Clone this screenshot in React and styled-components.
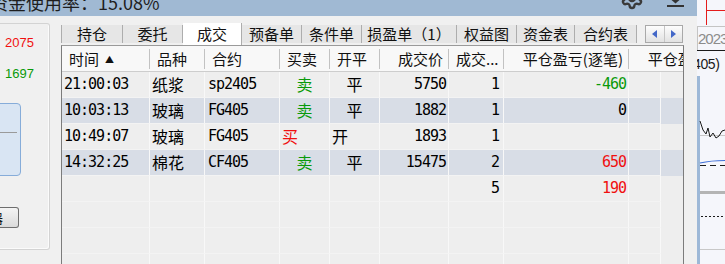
import styled, { createGlobalStyle } from "styled-components";
import { Settings } from "lucide-react";

const GlobalStyle = createGlobalStyle`
  html, body {
    margin: 0;
    padding: 0;
    background: #f0f0f0;
    overflow: hidden;
  }
  #root {
    width: 725px;
    height: 264px;
  }
`;

const tabs = [
  { label: "持仓", width: 62 },
  { label: "委托", width: 60 },
  { label: "成交", width: 59, active: true },
  { label: "预备单", width: 60 },
  { label: "条件单", width: 60 },
  { label: "损盈单（1）", width: 95 },
  { label: "权益图", width: 60 },
  { label: "资金表", width: 58 },
  { label: "合约表", width: 62 },
];

const headCols = "88px 55px 75px 50px 50px 69px 55px 125px 125px";
const rowCols = "88px 55px 75px 50px 50px 69px 55px 125px 32px";

const headers = [
  { label: "时间", sort: true },
  { label: "品种" },
  { label: "合约" },
  { label: "买卖" },
  { label: "开平" },
  { label: "成交价", align: "right" },
  { label: "成交..." },
  { label: "平仓盈亏(逐笔)", align: "right" },
  { label: "平仓盈亏(逐日)", align: "right" },
];

const trades = [
  { time: "21:00:03", name: "纸浆", code: "sp2405", side: "卖", offset: "平", price: "5750", qty: "1", pnl: "-460" },
  { time: "10:03:13", name: "玻璃", code: "FG405", side: "卖", offset: "平", price: "1882", qty: "1", pnl: "0" },
  { time: "10:49:07", name: "玻璃", code: "FG405", side: "买", offset: "开", price: "1893", qty: "1", pnl: "" },
  { time: "14:32:25", name: "棉花", code: "CF405", side: "卖", offset: "平", price: "15475", qty: "2", pnl: "650" },
  { time: "", name: "", code: "", side: "", offset: "", price: "", qty: "5", pnl: "190" },
  {}, {}, {},
];

const RED = "#f01010";
const GREEN = "#0a9a0a";

function pnlColor(v) {
  if (!v) return "#000";
  const n = Number(v);
  if (n < 0) return GREEN;
  if (n > 0) return RED;
  return "#000";
}

export default function App() {
  return (
    <Screen>
      <GlobalStyle />
      <Workspace>
        <TopBar>
          <Title>资金使用率：15.08%</Title>
          <TopIcons>
            <GearIcon size={24} strokeWidth={2.4} color="#3a3a3a" />
            <svg width="17" height="8" viewBox="0 0 17 8">
              <polygon points="4.5,0 12.5,0 8.5,3.6" fill="#333" />
              <rect x="0" y="5" width="17" height="2" fill="#333" />
            </svg>
          </TopIcons>
        </TopBar>

        <Body>
          <SidePanel>
            <GroupBox>
              <Value $color={RED}>2075</Value>
              <Value $color={GREEN} $gap={15}>1697</Value>
              <InfoBox>
                <InfoRule />
              </InfoBox>
              <SideButton>器</SideButton>
            </GroupBox>
          </SidePanel>

          <TradePanel>
            <TabStrip>
              {tabs.map((t, i) => (
                <Tab key={t.label} $w={t.width} $active={t.active} $first={i === 0}>
                  {t.label}
                </Tab>
              ))}
              <ArrowGroup>
                <ArrowBtn>
                  <Triangle $dir="left" />
                </ArrowBtn>
                <ArrowBtn>
                  <Triangle $dir="right" />
                </ArrowBtn>
              </ArrowGroup>
            </TabStrip>

            <Grid>
              <HeadRow>
                {headers.map((h) => (
                  <HeadCell key={h.label} $align={h.align}>
                    {h.label}
                    {h.sort && <SortMark>▲</SortMark>}
                  </HeadCell>
                ))}
              </HeadRow>
              {trades.map((r, i) => (
                <Row key={i} $alt={i % 2 === 1 && i < 5}>
                  <Cell $mono>{r.time}</Cell>
                  <Cell>{r.name}</Cell>
                  <Cell $mono $pad={3}>{r.code}</Cell>
                  <Cell
                    $align={r.side === "买" ? "left" : "center"}
                    $color={r.side === "买" ? RED : GREEN}
                  >
                    {r.side}
                  </Cell>
                  <Cell $align={r.offset === "开" ? "left" : "center"}>{r.offset}</Cell>
                  <Cell $mono $align="right">{r.price}</Cell>
                  <Cell $mono $align="right" $pad={4}>{r.qty}</Cell>
                  <Cell $mono $align="right" $color={pnlColor(r.pnl)}>{r.pnl}</Cell>
                  <Cell />
                </Row>
              ))}
            </Grid>
          </TradePanel>
        </Body>
      </Workspace>

      <ChartStrip />
    </Screen>
  );
}

function ChartStrip() {
  return (
    <ChartWrap>
      <svg width="28" height="264" viewBox="0 0 28 264">
        <rect width="28" height="264" fill="#f5f6fb" />
        <line x1="9.5" y1="0" x2="9.5" y2="25" stroke="#e41c1c" />
        <line x1="9.5" y1="10.5" x2="28" y2="10.5" stroke="#e41c1c" />
        <line x1="0" y1="26.5" x2="28" y2="26.5" stroke="#c4c4c4" />
        <line x1="0.5" y1="26" x2="0.5" y2="50" stroke="#c4c4c4" />
        <text x="1" y="44" fill="#8c8c8c" fontSize="15" letterSpacing="-1" fontFamily="Liberation Sans, sans-serif">
          2023
        </text>
        <line x1="0" y1="50.5" x2="28" y2="50.5" stroke="#1a1a1a" />
        <text x="-4" y="69" fill="#1a1a1a" fontSize="14" letterSpacing="-0.4" fontFamily="Liberation Sans, sans-serif">
          405)
        </text>
        <rect x="0" y="76" width="3" height="188" fill="#9db8d7" />
        <line x1="3" y1="135.5" x2="28" y2="135.5" stroke="#c8c8c8" />
        <polyline
          points="3,121 6,130 9,134 11,128 13,137 16,133 19,138 22,136 25,131 28,130"
          fill="none"
          stroke="#1a1a1a"
          strokeWidth="1"
        />
        <path d="M3 163 Q14 160.5 28 160.5" fill="none" stroke="#3f6fd8" strokeWidth="1.2" />
        <line x1="3" y1="165.5" x2="28" y2="165.5" stroke="#1a1a1a" strokeDasharray="6 4" />
        <rect x="3" y="191" width="25" height="3" fill="#b4b4b4" />
        <line x1="4" y1="216.5" x2="28" y2="216.5" stroke="#1a1a1a" strokeDasharray="2 2" />
        <line x1="3" y1="249.5" x2="28" y2="249.5" stroke="#c8c8c8" />
      </svg>
    </ChartWrap>
  );
}

const Screen = styled.div`
  display: flex;
  width: 725px;
  height: 264px;
  overflow: hidden;
  background: #f0f0f0;
`;

const Workspace = styled.div`
  width: 697px;
  flex-shrink: 0;
  display: flex;
  flex-direction: column;
`;

const TopBar = styled.div`
  height: 16px;
  flex-shrink: 0;
  display: flex;
  align-items: flex-start;
  background: #a0b9d3;
  overflow: hidden;
`;

const Title = styled.div`
  margin: -7px 0 0 -10px;
  font: 18px/18px "Noto Sans CJK SC", sans-serif;
  color: #1e1e1e;
  white-space: nowrap;
`;

const TopIcons = styled.div`
  margin-left: auto;
  margin-right: 13px;
  display: flex;
  align-items: flex-start;
  gap: 23px;
`;

const GearIcon = styled(Settings)`
  margin-top: -14px;
`;

const Body = styled.div`
  flex: 1;
  display: flex;
  min-height: 0;
`;

const SidePanel = styled.div`
  width: 50px;
  flex-shrink: 0;
  padding-top: 7px;
  box-sizing: border-box;
`;

const GroupBox = styled.div`
  height: 227px;
  box-sizing: border-box;
  border: 1px solid #d3d3d3;
  border-left: none;
  border-radius: 0 3px 3px 0;
  box-shadow: inset -1px -1px 0 #fbfbfb;
  padding: 11px 0 0 5px;
  display: flex;
  flex-direction: column;
  align-items: flex-start;
`;

const Value = styled.div`
  margin-top: ${(p) => p.$gap || 0}px;
  font: 13px/16px "Liberation Sans", Arial, sans-serif;
  color: ${(p) => p.$color};
`;

const InfoBox = styled.div`
  margin: 21px 0 0 -9px;
  width: 25px;
  height: 73px;
  box-sizing: border-box;
  background: #d9e5f3;
  border: 1px solid #86acd9;
  border-radius: 0 4px 4px 0;
`;

const InfoRule = styled.div`
  margin-top: 28px;
  width: 20px;
  height: 1px;
  background: #9a9a9a;
`;

const SideButton = styled.div`
  margin: 31px 0 0 -9px;
  width: 23px;
  height: 21px;
  box-sizing: border-box;
  border: 1px solid #6e6e6e;
  border-left: none;
  border-radius: 0 3px 3px 0;
  background: linear-gradient(#f4f4f4, #dadada);
  display: flex;
  justify-content: flex-end;
  align-items: center;
  padding-right: 15px;
  overflow: hidden;
  font: 13px/13px "Noto Sans CJK SC", sans-serif;
  color: #111;
`;

const TradePanel = styled.div`
  margin-left: 11px;
  width: 623px;
  flex-shrink: 0;
  padding-top: 7px;
  box-sizing: border-box;
  display: flex;
  flex-direction: column;
`;

const TabStrip = styled.div`
  height: 22px;
  flex-shrink: 0;
  display: flex;
  align-items: flex-start;
`;

const Tab = styled.div`
  width: ${(p) => p.$w}px;
  height: ${(p) => (p.$active ? 22 : 18)}px;
  margin-top: ${(p) => (p.$active ? 0 : 2)}px;
  box-sizing: border-box;
  background: ${(p) => (p.$active ? "#ffffff" : "#e6e6e6")};
  border-right: 1px solid #adadad;
  border-left: ${(p) => (p.$first ? "1px solid #adadad" : "none")};
  font: 15px/${(p) => (p.$active ? 22 : 18)}px "Noto Sans CJK SC", sans-serif;
  color: #111;
  text-align: center;
  white-space: nowrap;
`;

const ArrowGroup = styled.div`
  width: 38px;
  height: 18px;
  margin: 2px 1px 0 auto;
  box-sizing: border-box;
  border: 1px solid #a9a9a9;
  display: flex;
`;

const ArrowBtn = styled.div`
  flex: 1;
  display: flex;
  align-items: center;
  justify-content: center;
  background: linear-gradient(#fdfdfd, #e2e2e2);
  & + & {
    border-left: 1px solid #c6c6c6;
  }
`;

const Triangle = styled.div`
  width: 0;
  height: 0;
  border-top: 4px solid transparent;
  border-bottom: 4px solid transparent;
  ${(p) =>
    p.$dir === "left"
      ? "border-right: 5px solid #4468c8;"
      : "border-left: 5px solid #4468c8;"}
`;

const Grid = styled.div`
  flex: 1;
  min-height: 0;
  overflow: hidden;
  background: #eeeeee;
  border-top: 1px solid #9a9a9a;
  border-left: 1px solid #7c7c7c;
  border-right: 1px solid #7c7c7c;
`;

const HeadRow = styled.div`
  display: grid;
  grid-template-columns: ${headCols};
  height: 26px;
  box-sizing: border-box;
  background: #f8f8f8;
  border-bottom: 1px solid #cdcdcd;
  white-space: nowrap;
`;

const HeadCell = styled.div`
  position: relative;
  padding: 0 6px 0 7px;
  font: 15px/25px "Noto Sans CJK SC", sans-serif;
  color: #111;
  text-align: ${(p) => p.$align || "left"};
  overflow: hidden;
  &::after {
    content: "";
    position: absolute;
    right: 0;
    top: 3px;
    bottom: 2px;
    width: 1px;
    background: #c2c2c2;
  }
`;

const SortMark = styled.span`
  margin-left: 6px;
  font-size: 9px;
  vertical-align: 2px;
`;

const Row = styled.div`
  display: grid;
  grid-template-columns: ${rowCols};
  height: 26px;
  background: ${(p) => (p.$alt ? "#d8dde6" : "#eeeeee")};
`;

const Cell = styled.div`
  box-sizing: border-box;
  padding: 0 ${(p) => p.$pad || 2}px;
  border-right: 1px solid #f8f8f8;
  border-bottom: 1px solid #f3f3f3;
  text-align: ${(p) => p.$align || "left"};
  color: ${(p) => p.$color || "#000"};
  font-family: ${(p) =>
    p.$mono ? '"DejaVu Sans Mono", monospace' : '"Noto Sans CJK SC", sans-serif'};
  font-size: ${(p) => (p.$mono ? 15 : 16)}px;
  letter-spacing: ${(p) => (p.$mono ? "-1px" : "0")};
  line-height: 25px;
  white-space: nowrap;
  overflow: hidden;
`;

const ChartWrap = styled.div`
  width: 28px;
  height: 264px;
  flex-shrink: 0;
  svg {
    display: block;
  }
`;
